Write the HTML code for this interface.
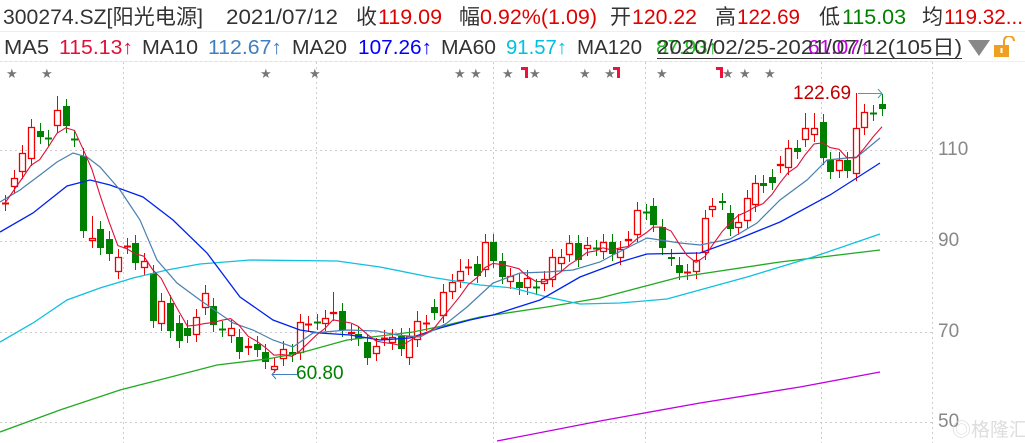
<!DOCTYPE html>
<html><head><meta charset="utf-8">
<style>
html,body{margin:0;padding:0;background:#fff;width:1025px;height:443px;overflow:hidden;font-family:"Liberation Sans","Noto Sans CJK SC",sans-serif;}
.t{position:absolute;white-space:nowrap;}
</style></head><body>
<svg style="position:absolute;left:0;top:0" width="1025" height="62" font-family="Liberation Sans, Noto Sans CJK SC, sans-serif">
<g font-size="21">
<text x="3" y="24" fill="#333" textLength="200" lengthAdjust="spacingAndGlyphs">300274.SZ[阳光电源]</text>
<text x="226" y="24" fill="#333" textLength="112" lengthAdjust="spacingAndGlyphs">2021/07/12</text>
<text x="356" y="24" fill="#333">收</text>
<text x="378" y="24" fill="#e00000" textLength="64" lengthAdjust="spacingAndGlyphs">119.09</text>
<text x="459" y="24" fill="#333">幅</text>
<text x="480" y="24" fill="#e00000" textLength="117" lengthAdjust="spacingAndGlyphs">0.92%(1.09)</text>
<text x="610" y="24" fill="#333">开</text>
<text x="632" y="24" fill="#e00000" textLength="65" lengthAdjust="spacingAndGlyphs">120.22</text>
<text x="715" y="24" fill="#333">高</text>
<text x="737" y="24" fill="#e00000" textLength="63" lengthAdjust="spacingAndGlyphs">122.69</text>
<text x="819" y="24" fill="#333">低</text>
<text x="842" y="24" fill="#008000" textLength="64" lengthAdjust="spacingAndGlyphs">115.03</text>
<text x="922" y="24" fill="#333">均</text>
<text x="944" y="24" fill="#e00000" textLength="79" lengthAdjust="spacingAndGlyphs">119.32...</text>
</g>
<g font-size="20">
<text x="4" y="54" fill="#333" textLength="45" lengthAdjust="spacingAndGlyphs">MA5</text>
<text x="59" y="54" fill="#e0103a" textLength="74" lengthAdjust="spacingAndGlyphs">115.13↑</text>
<text x="142" y="54" fill="#333" textLength="56" lengthAdjust="spacingAndGlyphs">MA10</text>
<text x="208" y="54" fill="#3f7fbf" textLength="74" lengthAdjust="spacingAndGlyphs">112.67↑</text>
<text x="292" y="54" fill="#333" textLength="55" lengthAdjust="spacingAndGlyphs">MA20</text>
<text x="358" y="54" fill="#0000ff" textLength="74" lengthAdjust="spacingAndGlyphs">107.26↑</text>
<text x="441" y="54" fill="#333" textLength="55" lengthAdjust="spacingAndGlyphs">MA60</text>
<text x="506" y="54" fill="#00c0e0" textLength="61" lengthAdjust="spacingAndGlyphs">91.57↑</text>
<text x="577" y="54" fill="#333" textLength="65" lengthAdjust="spacingAndGlyphs">MA120</text>
<text x="656" y="54" fill="#22bb22" textLength="62" lengthAdjust="spacingAndGlyphs">87.93↑</text>
<text x="808" y="54" fill="#c000e0" textLength="62" lengthAdjust="spacingAndGlyphs">61.07↑</text>
<text x="657" y="54" fill="#333" textLength="305" lengthAdjust="spacingAndGlyphs">2020/02/25-2021/07/12(105日)</text>
</g>
<line x1="657" y1="58.5" x2="962" y2="58.5" stroke="#333" stroke-width="1"/>
</svg>
<div style="position:absolute;left:968px;top:40px;width:0;height:0;border-left:11px solid transparent;border-right:11px solid transparent;border-top:16px solid #888"></div>
<svg style="position:absolute;left:992px;top:36px" width="26" height="22"><path d="M12 9 V5 a5 5 0 0 1 10 0" fill="none" stroke="#f0a020" stroke-width="2"/><rect x="2" y="9" width="15" height="12" fill="#f0a020"/><rect x="8.5" y="12" width="2" height="5" fill="#fff"/></svg>
<div style="position:absolute;left:0;top:31px;width:1025px;height:1px;background:#eee"></div>
<div style="position:absolute;left:0;top:61px;width:1025px;height:1px;background:#f0f0f0"></div>
<svg id="c" style="position:absolute;left:0;top:0" width="1025" height="443"></svg>
<div class="t" style="left:938px;top:139px;font-size:19px;color:#888">110</div>
<div class="t" style="left:938px;top:230px;font-size:19px;color:#888">90</div>
<div class="t" style="left:938px;top:321px;font-size:19px;color:#888">70</div>
<div class="t" style="left:938px;top:411px;font-size:19px;color:#888">50</div>
<div class="t" style="left:952px;top:415px;font-size:19px;color:#ddd">◎格隆汇</div>
<div class="t" style="left:793px;top:83px;font-size:19px;color:#c00000">122.69</div>
<div class="t" style="left:296px;top:363px;font-size:19px;color:#008000">60.80</div>
<script>
var s=document.getElementById('c'),h='';
function L(x1,y1,x2,y2,c,w,d){h+='<line x1="'+x1+'" y1="'+y1+'" x2="'+x2+'" y2="'+y2+'" stroke="'+c+'" stroke-width="'+(w||1)+'"'+(d?' stroke-dasharray="'+d+'"':'')+'/>';}
[150,241,332,422].forEach(function(y){L(0,y+.5,932,y+.5,'#ccc',1,'2,3');});
L(0,61.5,932,61.5,'#ddd',1,'2,3');
[123,316,493,645,821].forEach(function(x){L(x+.5,62,x+.5,443,'#ccc',1,'2,3');});
L(932.5,62,932.5,443,'#ccc',1,'2,3');
var A=[['r',203,204],['r',178,187],['r',153,172],['r',127,159],['g',131,137],['g',138,139],['r',110,126,96],['g',106,126,99],['g',139,140],['g',156,231],['r',238,241,216],['g',229,248],['g',239,254],['r',257,272],['r',246,247],['g',243,263],['r',261,268],['g',273,321],['r',301,324],['g',303,331],['g',323,341],['g',328,336],['r',317,335],['r',293,308],['g',306,325],['g',329,330],['r',328,336],['g',337,352],['r',346,348],['g',344,350],['g',352,362],['r',366,370,null,373]];
var D=[];A.forEach(function(a,i){D.push([5+i*8.68].concat(a));});
var B=[[283,'r',349,359],[292,'g',352,355],[300,'r',322,353],[308,'r',324,325],[317,'g',322,323],[325,'r',318,324],[333,'r',312,314,292],[342,'g',311,330],[351,'r',332,334],[358,'g',334,339],[367,'g',342,358],[376,'r',346,354],[384,'r',338,339],[392,'r',337,343],[401,'g',336,349],[409,'r',336,358],[417,'r',321,340,311],[426,'r',323,324],[434,'g',307,313],[443,'r',292,316],[452,'r',282,292],[460,'r',271,281,259],[468,'r',267,268],[477,'g',264,276],[485,'r',242,270],[493,'g',242,261,234],[502,'g',261,277],[510,'r',276,282],[519,'g',282,288],[527,'r',278,288],[536,'g',287,288],[544,'r',279,284],[552,'r',257,280],[561,'r',257,264],[569,'r',243,255],[578,'g',243,260],
[587,'r',245,249],[596,'g',248,249],[603,'r',242,252],[612,'g',242,254],[620,'r',249,258],[628,'r',239,241],[637,'r',210,235],[646,'g',212,213],[653,'g',206,225],[662,'g',227,248],[671,'g',257,259],[679,'g',265,273],[687,'r',272,273],[696,'r',260,272],[705,'r',218,253],[712,'r',206,210],[722,'g',201,203],[730,'g',213,229],[738,'r',222,228],[747,'r',198,221],[755,'r',183,205],[763,'g',183,186],[772,'g',177,183],[780,'r',164,166],[788,'r',148,168],[797,'g',148,152],[805,'r',128,140,113],[814,'r',128,135,113],[823,'g',122,158],[830,'g',160,172],[839,'r',160,171],[847,'g',160,171],[856,'r',128,174,93],[864,'r',112,128],[873,'g',113,114],[882,'g',104,109,94]];
D=D.concat(B);
var cl=[];
D.forEach(function(d){var x=Math.round(d[0])+.5,c=d[1],t=d[2],b=d[3],hi=d[4]||t-8,lo=d[5]||b+7,col=c=='r'?'#f00000':'#008000';
L(x,hi,x,lo,col,1);
if(b-t<2){L(x-3.5,t+.5,x+3.5,t+.5,col,2);}
else if(c=='r'){h+='<rect x="'+(x-3)+'" y="'+(t+.5)+'" width="6" height="'+(b-t-1)+'" fill="#fff" stroke="'+col+'" stroke-width="1.3"/>';}
else{h+='<rect x="'+(x-3.5)+'" y="'+t+'" width="7" height="'+(b-t)+'" fill="'+col+'"/>';}
cl.push([d[0],c=='r'?t:b]);});
function P(pts,c,w){h+='<polyline points="'+pts.map(function(p){return p.join(',')}).join(' ')+'" fill="none" stroke="'+c+'" stroke-width="'+(w||1.2)+'"/>';}
var m5=[];for(var i=0;i<cl.length;i++){var a=0,n=0;for(var j=Math.max(0,i-4);j<=i;j++){a+=cl[j][1];n++;}m5.push([cl[i][0],(a/n).toFixed(1)]);}
P([[0,432],[60,410],[120,390],[163,379],[217,365],[267,359],[300,353],[347,340],[413,332],[447,325],[480,317],[547,307],[600,298],[680,277],[780,262],[880,250]],'#22aa22',1.3);
P([[497,441],[600,421],[700,403],[800,387],[880,372]],'#c000e0',1.3);
P([[0,342],[33,323],[67,300],[100,288],[133,278],[167,270],[200,264],[250,260],[337,261],[380,267],[430,277],[480,285],[513,288],[547,297],[580,304],[620,303],[667,299],[747,277],[813,257],[880,234]],'#10c0e0',1.3);
P([[0,232],[33,213],[67,186],[90,180],[110,185],[143,197],[173,220],[207,253],[240,297],[273,320],[300,330],[320,333],[350,335],[380,340],[410,338],[440,328],[470,320],[493,315],[540,300],[580,277],[620,262],[647,254],[700,253],[738,239],[780,222],[830,195],[880,163]],'#0022ee',1.3);
P([[0,202],[20,190],[40,175],[57,162],[73,153],[87,157],[100,167],[120,190],[140,220],[157,260],[177,283],[200,300],[233,323],[253,330],[273,340],[293,347],[313,333],[347,330],[377,331],[397,335],[420,337],[447,323],[467,307],[493,283],[520,273],[547,272],[573,270],[600,262],[613,255],[647,238],[680,243],[700,245],[730,239],[757,223],[780,200],[807,180],[827,160],[857,157],[880,138]],'#4a80b0',1.2);
P(m5,'#e0103a',1.1);
L(858,93.5,882,93.5,'#3f9fbf',1);h+='<path d="M878 89 L882 93.5 L878 98" fill="none" stroke="#3f9fbf"/>';
L(272,374.5,297,374.5,'#3f7fbf',1);h+='<path d="M276 370 L272 374.5 L276 379" fill="none" stroke="#3f7fbf"/>';
[12,47,266,315,460,476,508,535,585,610,662,728,745,770].forEach(function(x){h+='<text x="'+(x-6)+'" y="78" font-size="13" fill="#777" font-family="DejaVu Sans">★</text>';});
[526,618,721].forEach(function(x){h+='<path d="M'+(x-5)+' 67 h7 v11 h-3 v-8 h-4z" fill="#f0103a"/>';});
s.innerHTML=h;
</script>
</body></html>
